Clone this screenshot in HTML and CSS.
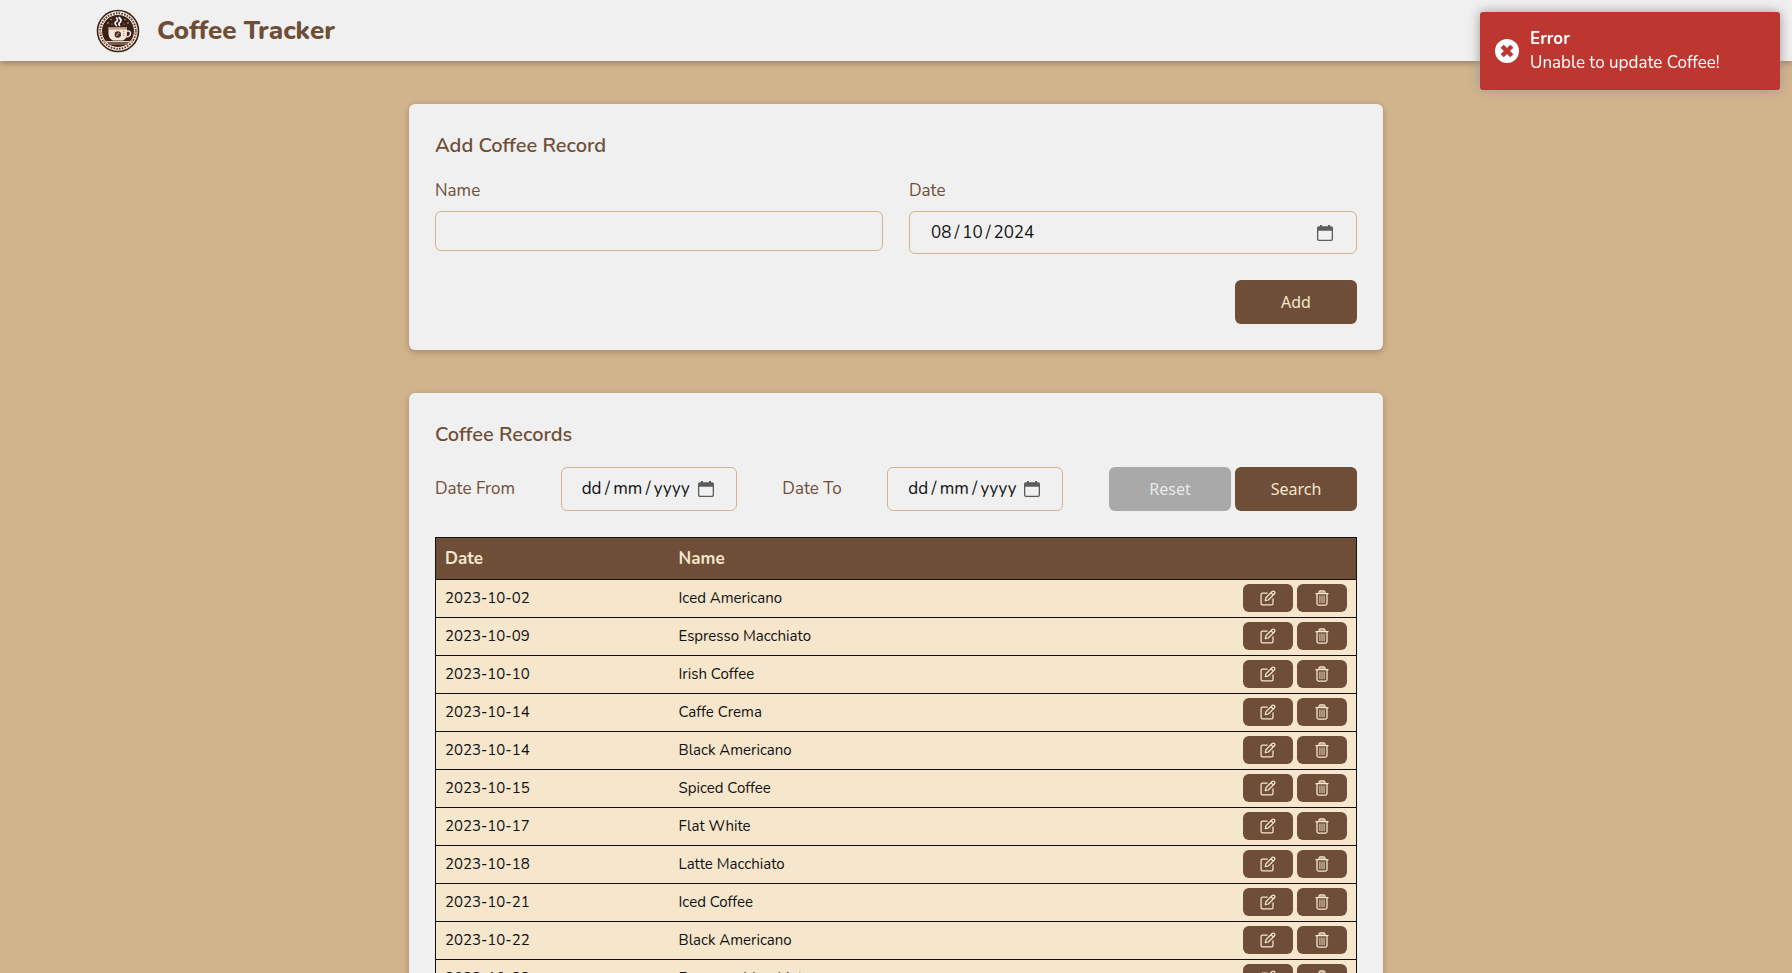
FILE: index.html
```html
<!DOCTYPE html>
<html lang="en-GB">
<head>
<meta charset="utf-8">
<meta name="viewport" content="width=device-width, initial-scale=1">
<title>Coffee Tracker</title>
<link rel="stylesheet" href="styles.css">
</head>
<body>
<svg class="sprite" aria-hidden="true">
  <symbol id="icon-edit" viewBox="0 0 16 16">
    <g fill="none" stroke="currentColor" stroke-width="1.25" stroke-linejoin="round" stroke-linecap="round">
      <path d="M7.2 3H2.400Q1.100 3 1.100 4.300V13.600Q1.100 14.900 2.400 14.900H11.700Q13 14.900 13 13.600V8.800"/>
      <path d="M5.300 10.700 6 7.700 12.200 1.500Q13.200.600 14.400 1.600 15.400 2.800 14.500 3.800L8.300 10ZM11 2.700 13.300 5"/>
    </g>
  </symbol>
  <symbol id="icon-trash" viewBox="0 0 16 16">
    <g fill="none" stroke="currentColor" stroke-linejoin="round" stroke-linecap="round">
      <path stroke-width="1.300" d="M2 3.700H14M3 3.900V13.600Q3 15.100 4.500 15.100H11.500Q13 15.100 13 13.600V3.900M4.800 3.400Q5 .9 6.400.9H9.600Q11 .9 11.200 3.400"/>
      <path stroke-width=".9" d="M5.900 6V12.700M8 6V12.700M10.100 6V12.700"/>
    </g>
    <path fill="currentColor" opacity=".6" d="M5.200 3.400 6.300 1.200H9.700L10.800 3.400Z"/>
  </symbol>
  <symbol id="icon-calendar" viewBox="0 0 16 16">
    <path fill="#5c5c5c" fill-rule="evenodd" d="M3 0H5V1.200H11V0H13V1.200H14.200Q16 1.200 16 3V14.200Q16 16 14.200 16H1.800Q0 16 0 14.200V3Q0 1.200 1.800 1.200H3ZM1.300 5.800V14Q1.300 14.700 2 14.700H14Q14.700 14.700 14.700 14V5.800Z"/>
  </symbol>
</svg>

<header class="topbar">
  <svg class="logo" viewBox="0 0 44 44" role="img" aria-label="Coffee Tracker logo">
    <circle cx="22" cy="22" r="21.300" fill="#3b2018"/>
    <circle cx="22" cy="22" r="17.800" fill="none" stroke="#efe4d6" stroke-width="3.800"/>
    <circle cx="22" cy="22" r="17.800" fill="none" stroke="#4b2e24" stroke-width="1.800" stroke-dasharray="1.500 1.300"/>
    <g fill="#c9a184"><circle cx="4.600" cy="24" r="1.600"/><circle cx="39.400" cy="24" r="1.600"/><circle cx="8.200" cy="32.500" r="1.400"/><circle cx="35.800" cy="32.500" r="1.400"/></g>
    <circle cx="22" cy="22" r="15.400" fill="#3b2018"/>
    <g fill="#d8bda4"><circle cx="12" cy="14" r=".8"/><circle cx="15" cy="10.500" r=".7"/><circle cx="16" cy="15" r=".6"/><circle cx="29" cy="10.500" r=".7"/><circle cx="32" cy="14" r=".8"/><circle cx="28" cy="15" r=".6"/></g>
    <path d="M20.500 16.500Q17.500 14 20.500 12.500 22.500 11 20.500 9M23.500 16.500Q22 14.500 24.500 13 26 10.500 23 8.500" fill="none" stroke="#fff" stroke-width="1.600" stroke-linecap="round"/>
    <path d="M12.500 18.500H31V25Q30.500 30 27 31.500H17Q13 30 12.500 25Z" fill="#f3e8da"/>
    <path d="M12.500 18.500H31V20.700H12.500Z" fill="#c79f83"/>
    <path d="M31 22Q35 21.500 34.500 25 34 28 30.200 27.800" fill="none" stroke="#f3e8da" stroke-width="1.500"/>
    <circle cx="21.800" cy="25.500" r="3.200" fill="#4b2e24"/>
    <path d="M20.400 27Q21.300 25 23.200 24.100" stroke="#c9a184" stroke-width="1.100" fill="none"/>
    <path d="M27.800 22V28" stroke="#8b6a57" stroke-width="1" stroke-dasharray="1 1"/>
    <path d="M9.500 32.700H34.500" stroke="#e8d6c3" stroke-width="1.300"/>
    <path d="M12 35H32" stroke="#a87f66" stroke-width="1.200"/>
  </svg>
  <h1 class="brand">Coffee Tracker</h1>
</header>

<div class="toast" role="alert">
  <svg class="toast-icon" viewBox="0 0 24 24" aria-hidden="true">
    <circle cx="12" cy="12" r="12" fill="#fff"/>
    <path d="M7.200 7.200 16.800 16.800M16.800 7.200 7.200 16.800" stroke="#bd362f" stroke-width="4.400"/>
  </svg>
  <div>
    <div class="toast-title">Error</div>
    <div>Unable to update Coffee!</div>
  </div>
</div>

<main class="page">
  <section class="card">
    <h2 class="card-title">Add Coffee Record</h2>
    <form class="add-form">
      <div class="field">
        <label for="name">Name</label>
        <input class="box name-box" id="name" type="text">
      </div>
      <div class="field">
        <label for="date">Date</label>
        <input class="box date-box" id="date" type="date" value="2024-08-10">
      </div>
      <button class="btn add-btn" type="button">Add</button>
    </form>
  </section>

  <section class="card">
    <h2 class="card-title">Coffee Records</h2>
    <form class="filters">
      <label for="from">Date From</label>
      <div class="box picker">
        <input class="picker-input" id="from" type="text" placeholder="dd&thinsp;/&thinsp;mm&thinsp;/&thinsp;yyyy">
        <svg class="calendar" aria-hidden="true"><use href="#icon-calendar"/></svg>
      </div>
      <label for="to">Date To</label>
      <div class="box picker">
        <input class="picker-input" id="to" type="text" placeholder="dd&thinsp;/&thinsp;mm&thinsp;/&thinsp;yyyy">
        <svg class="calendar" aria-hidden="true"><use href="#icon-calendar"/></svg>
      </div>
      <div class="actions">
        <button class="btn btn-muted" type="reset">Reset</button>
        <button class="btn" type="button">Search</button>
      </div>
    </form>
    <table class="records">
      <thead><tr><th class="col-date">Date</th><th>Name</th><th class="col-actions"></th></tr></thead>
      <tbody id="rows"></tbody>
    </table>
  </section>
</main>
<script src="app.js"></script>
</body>
</html>
```
FILE: styles.css
```css
*, *::before, *::after { box-sizing: border-box; }

:root {
  --brown: #6f4e37;
  --cream: #f5e6cc;
  --tan: #d2b48c;
  --panel: #f0f0f0;
}

html { overflow: hidden; }

body {
  margin: 0;
  height: 100vh;
  overflow: hidden;
  background: var(--tan);
  color: #111;
  font: 17px/24px Nunito, Lato, "Noto Sans", sans-serif;
}

.sprite { display: none; }

.topbar {
  display: flex;
  align-items: center;
  gap: 17px;
  height: 61px;
  padding: 0 96px;
  background: var(--panel);
  box-shadow: 0 2px 6px rgba(0, 0, 0, 0.3);
}

.logo { width: 44px; height: 44px; }

.brand {
  margin: 0;
  color: var(--brown);
  font-size: 26px;
  line-height: 36px;
  font-weight: 800;
}

.toast {
  position: fixed;
  top: 12px;
  right: 12px;
  display: flex;
  align-items: center;
  gap: 11px;
  width: 300px;
  padding: 15px;
  border-radius: 3px;
  background: #bd362f;
  box-shadow: 0 0 12px #999;
  color: #fff;
}

.toast-icon { width: 24px; height: 24px; }
.toast-title { font-weight: 700; }

.page {
  display: flex;
  flex-direction: column;
  gap: 43px;
  max-width: 974px;
  margin: 0 auto;
  padding-top: 43px;
}

.card {
  padding: 26px;
  border-radius: 6px;
  background: var(--panel);
  box-shadow: 0 2px 6px rgba(0, 0, 0, 0.25);
}

.card-title {
  margin: 0 0 18px;
  padding-top: 2px;
  color: var(--brown);
  font-size: 20px;
  line-height: 28px;
  font-weight: 600;
}

label {
  color: var(--brown);
  line-height: 26px;
}

.add-form {
  display: grid;
  grid-template-columns: 1fr 1fr;
  gap: 26px;
}

.field {
  display: flex;
  flex-direction: column;
  gap: 7px;
}

.box {
  border: 1px solid var(--tan);
  border-radius: 6px;
  background: transparent;
  color: #111;
  font: inherit;
  padding: 0 20px;
}

.name-box { height: 40px; }
.date-box { height: 43px; }
.date-box::-webkit-datetime-edit-text { padding: 0 2px; }
.date-box::-webkit-calendar-picker-indicator {
  width: 16px;
  height: 16px;
  padding: 0;
  margin-right: 3px;
  background: url("data:image/svg+xml,%3Csvg xmlns='http://www.w3.org/2000/svg' viewBox='0 0 16 16'%3E%3Cpath fill='%235c5c5c' fill-rule='evenodd' d='M3 0H5V1.2H11V0H13V1.2H14.2Q16 1.2 16 3V14.2Q16 16 14.2 16H1.8Q0 16 0 14.2V3Q0 1.2 1.8 1.2H3ZM1.3 5.8V14Q1.3 14.7 2 14.7H14Q14.7 14.7 14.7 14V5.8Z'/%3E%3C/svg%3E") center / 16px no-repeat;
}

.btn {
  width: 122px;
  height: 44px;
  padding: 0;
  border: 0;
  border-radius: 6px;
  background: var(--brown);
  color: var(--cream);
  font: 16px/24px "Noto Sans", sans-serif;
}

.btn-muted {
  background: #a9a9a9;
  color: #e8e8e8;
}

.add-btn {
  grid-column: 2;
  justify-self: end;
}

.filters {
  display: flex;
  align-items: center;
  justify-content: space-between;
}

.picker {
  display: flex;
  align-items: center;
  width: 176px;
  height: 44px;
}

.picker-input {
  flex: 1;
  min-width: 0;
  padding: 0;
  border: 0;
  background: transparent;
  font: inherit;
  color: #111;
}

.picker-input::placeholder { color: #111; }
.calendar { width: 16px; height: 16px; margin-right: 2px; }
.actions { display: flex; gap: 4px; }

.records {
  width: 100%;
  margin-top: 26px;
  border-collapse: collapse;
  border: 1px solid #111;
  table-layout: fixed;
  background: var(--cream);
  font-size: 15px;
}

.records tr { border-bottom: 1px solid #111; }
.records th, .records td { padding: 0 9px; text-align: left; }
.records th {
  height: 42px;
  background: var(--brown);
  color: var(--cream);
  font-size: 17px;
  font-weight: 700;
}
.records td {
  height: 38px;
  padding-bottom: 2px;
}
.col-date { width: 234px; }
.col-actions { width: 124px; }

.row-actions {
  display: flex;
  justify-content: flex-end;
  gap: 4px;
}

.icon-btn {
  display: grid;
  place-items: center;
  width: 50px;
  height: 28px;
  padding: 0;
  border: 0;
  border-radius: 6px;
  background: var(--brown);
  color: var(--cream);
}

.icon-btn svg { width: 16px; height: 16px; }
```
FILE: app.js
```js
const records = [
  ["2023-10-02", "Iced Americano"],
  ["2023-10-09", "Espresso Macchiato"],
  ["2023-10-10", "Irish Coffee"],
  ["2023-10-14", "Caffe Crema"],
  ["2023-10-14", "Black Americano"],
  ["2023-10-15", "Spiced Coffee"],
  ["2023-10-17", "Flat White"],
  ["2023-10-18", "Latte Macchiato"],
  ["2023-10-21", "Iced Coffee"],
  ["2023-10-22", "Black Americano"],
  ["2023-10-22", "Espresso Macchiato"]
];

const button = (icon, label) =>
  `<button class="icon-btn" type="button" aria-label="${label}"><svg aria-hidden="true"><use href="#icon-${icon}"/></svg></button>`;

document.getElementById("rows").innerHTML = records.map(([date, name]) =>
  `<tr><td>${date}</td><td>${name}</td><td><div class="row-actions">${button("edit", "Edit")}${button("trash", "Delete")}</div></td></tr>`
).join("");
```
